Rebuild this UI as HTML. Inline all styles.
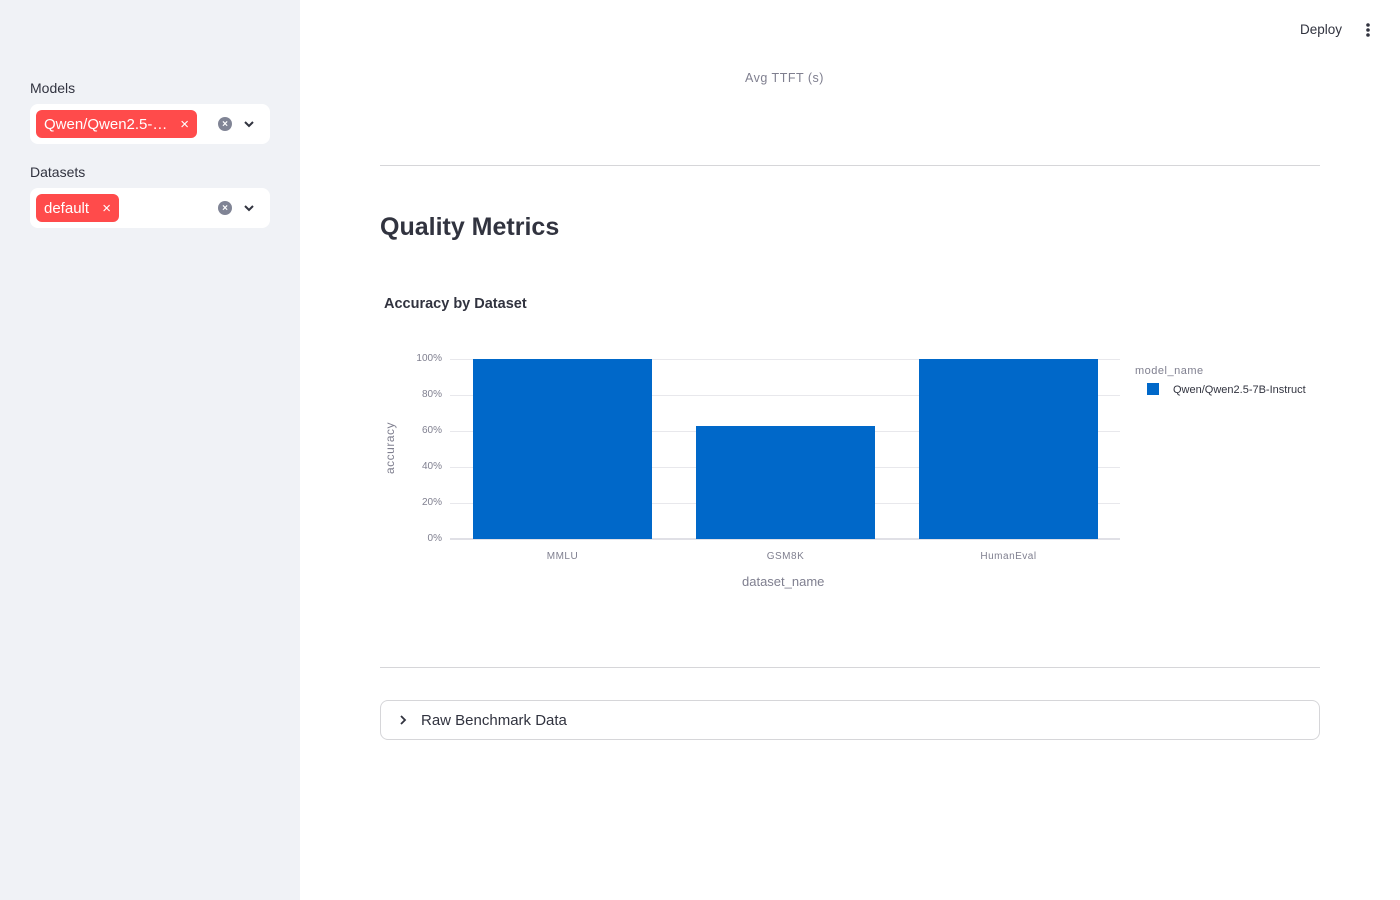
<!DOCTYPE html>
<html><head><meta charset="utf-8"><style>
*{box-sizing:border-box;margin:0;padding:0}
body{width:1400px;height:900px;position:relative;background:#fff;font-family:"Liberation Sans",sans-serif;color:#31333f;overflow:hidden}
.side{position:absolute;left:0;top:0;width:300px;height:900px;background:#f0f2f6}
.lbl{position:absolute;left:30px;font-size:14px;color:#31333f}
.sel{position:absolute;left:30px;width:240px;height:40px;background:#fff;border-radius:8px}
.tag{position:absolute;left:6px;top:6px;height:28px;background:#ff4b4b;color:#fff;border-radius:6px;font-size:15px;line-height:29px;padding-left:8px}
.tag span{position:absolute;right:8px;top:0}
.clr{position:absolute;left:188px;top:13px;width:14px;height:14px;border-radius:50%;background:#808495;color:#fff;font-size:10px;line-height:15px;text-align:center;font-weight:bold}
.chev{position:absolute;left:212px;top:13px}
hr{position:absolute;left:380px;width:940px;border:0;border-top:1px solid #d6d6d9}
.grid{position:absolute;left:450px;width:670px;border-top:1px solid #e8e8ec}
.yt{position:absolute;left:400px;width:42px;text-align:right;font-size:10px;color:#7f7f8f}
.bar{position:absolute;background:#0068c9;width:179px}
.xt{position:absolute;font-size:10px;color:#7f7f8f;width:179px;text-align:center;top:551px;letter-spacing:.5px}
</style></head><body>
<div class="side">
<div class="lbl" style="top:80px">Models</div>
<div class="sel" style="top:104px"><div class="tag" style="width:161px">Qwen/Qwen2.5-…<span>×</span></div><div class="clr">×</div>
<svg class="chev" width="14" height="14" viewBox="0 0 14 14"><path d="M3 5l4 4 4-4" stroke="#31333f" stroke-width="2" fill="none"/></svg></div>
<div class="lbl" style="top:164px">Datasets</div>
<div class="sel" style="top:188px"><div class="tag" style="width:83px">default<span>×</span></div><div class="clr">×</div>
<svg class="chev" width="14" height="14" viewBox="0 0 14 14"><path d="M3 5l4 4 4-4" stroke="#31333f" stroke-width="2" fill="none"/></svg></div>
</div>
<div style="position:absolute;left:1300px;top:22px;font-size:13.5px">Deploy</div>
<svg style="position:absolute;left:1364px;top:22px" width="8" height="16"><circle cx="4" cy="3" r="1.8" fill="#31333f"/><circle cx="4" cy="8" r="1.8" fill="#31333f"/><circle cx="4" cy="13" r="1.8" fill="#31333f"/></svg>
<div style="position:absolute;left:745px;top:71px;font-size:12.5px;color:#7f7f8f;letter-spacing:.5px">Avg TTFT (s)</div>
<hr style="top:165px">
<div style="position:absolute;left:380px;top:213px;font-size:25px;font-weight:bold">Quality Metrics</div>
<div style="position:absolute;left:384px;top:296px;font-size:14.5px;font-weight:bold">Accuracy by Dataset</div>
<div class="grid" style="top:359px"></div><div class="grid" style="top:395px"></div><div class="grid" style="top:431px"></div><div class="grid" style="top:467px"></div><div class="grid" style="top:503px"></div><div class="grid" style="top:538px;border-top:2px solid #e0e0e6"></div>
<div class="yt" style="top:353px">100%</div><div class="yt" style="top:389px">80%</div><div class="yt" style="top:425px">60%</div><div class="yt" style="top:461px">40%</div><div class="yt" style="top:497px">20%</div><div class="yt" style="top:533px">0%</div>
<div style="position:absolute;left:355px;top:441px;transform:rotate(-90deg);font-size:12px;color:#7f7f8f;width:70px;text-align:center;letter-spacing:.5px">accuracy</div>
<div class="bar" style="left:473px;top:359px;height:180px"></div>
<div class="bar" style="left:696px;top:426px;height:113px"></div>
<div class="bar" style="left:919px;top:359px;height:180px"></div>
<div class="xt" style="left:473px">MMLU</div><div class="xt" style="left:696px">GSM8K</div><div class="xt" style="left:919px">HumanEval</div>
<div style="position:absolute;left:742px;top:574px;font-size:13px;color:#7f7f8f">dataset_name</div>
<div style="position:absolute;left:1135px;top:365px;font-size:11px;color:#7f7f8f;letter-spacing:.5px">model_name</div>
<div style="position:absolute;left:1147px;top:383px;width:12px;height:12px;background:#0068c9"></div>
<div style="position:absolute;left:1173px;top:384px;font-size:11px;color:#31333f">Qwen/Qwen2.5-7B-Instruct</div>
<hr style="top:667px">
<div style="position:absolute;left:380px;top:700px;width:940px;height:40px;border:1px solid #d6d6d9;border-radius:8px">
<svg style="position:absolute;left:16px;top:12px" width="12" height="14"><path d="M4 3l4 4-4 4" stroke="#31333f" stroke-width="1.8" fill="none"/></svg>
<div style="position:absolute;left:40px;top:11px;font-size:15px">Raw Benchmark Data</div></div>
</body></html>
